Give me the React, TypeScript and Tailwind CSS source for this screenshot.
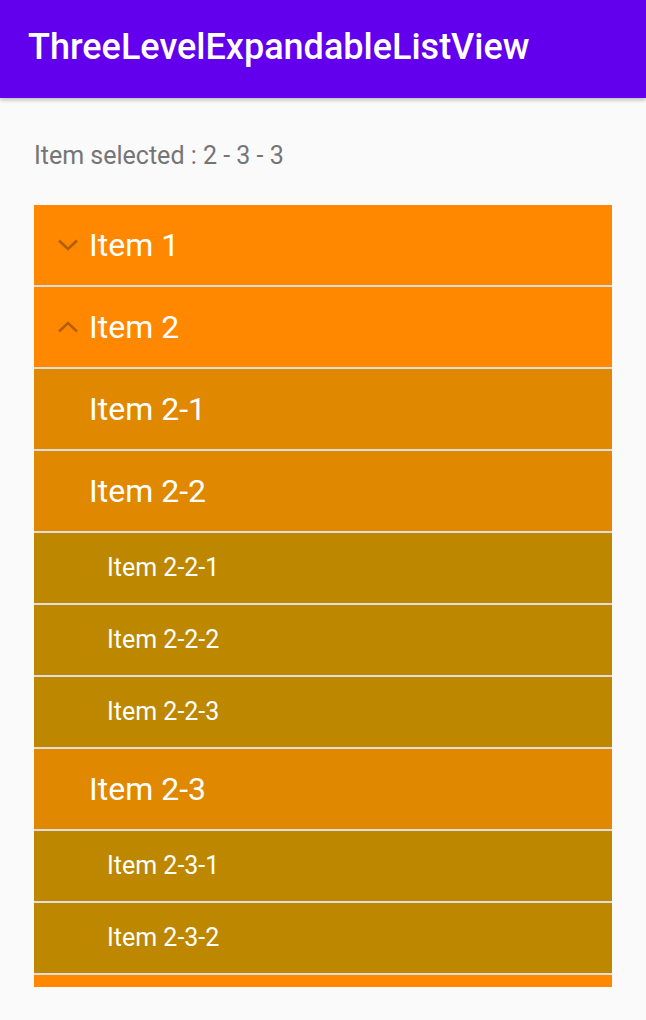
import React from "react";

type Row = {
  label: string;
  level: 1 | 2 | 3;
  expanded?: boolean;
};

const rows: Row[] = [
  { label: "Item 1", level: 1, expanded: false },
  { label: "Item 2", level: 1, expanded: true },
  { label: "Item 2-1", level: 2 },
  { label: "Item 2-2", level: 2 },
  { label: "Item 2-2-1", level: 3 },
  { label: "Item 2-2-2", level: 3 },
  { label: "Item 2-2-3", level: 3 },
  { label: "Item 2-3", level: 2 },
  { label: "Item 2-3-1", level: 3 },
  { label: "Item 2-3-2", level: 3 },
  { label: "Item 3", level: 1, expanded: false },
];

const Chevron = ({ up }: { up?: boolean }) => (
  <svg width="22" height="12" viewBox="0 0 22 12" className="shrink-0">
    <polyline
      points={up ? "2,10.5 11,2 20,10.5" : "2,1.5 11,10 20,1.5"}
      fill="none"
      stroke="rgba(0,0,0,0.3)"
      strokeWidth="2.6"
    />
  </svg>
);

const ListRow = ({ row }: { row: Row }) => {
  if (row.level === 3) {
    return (
      <div className="flex items-center h-[72px] bg-[#bd8700] border-b-2 border-[#dedede] pl-[73px] text-[25px] text-white">
        {row.label}
      </div>
    );
  }

  return (
    <div
      className={`flex items-center h-[82px] border-b-2 border-[#dedede] text-[32px] text-white ${
        row.level === 1 ? "bg-[#ff8800]" : "bg-[#df8800]"
      }`}
    >
      <div className="w-[55px] flex justify-end pr-[10px]">
        {row.level === 1 && <Chevron up={row.expanded} />}
      </div>
      <span>{row.label}</span>
    </div>
  );
};

export default function App() {
  return (
    <div
      className="w-[646px] h-[1020px] bg-[#fafafa] overflow-hidden"
      style={{ fontFamily: "Roboto, 'Noto Sans', sans-serif" }}
    >
      {/* toolbar */}
      <div className="h-[98px] bg-[#6200ee] flex items-center pl-[28px] pb-[4px] shadow-[0_2px_4px_rgba(0,0,0,0.25)] relative">
        <h1 className="text-white text-[36px] font-medium leading-none">
          ThreeLevelExpandableListView
        </h1>
      </div>

      <div className="px-[34px] pt-[43px]">
        <p className="text-[#757575] text-[25px] leading-[30px]">
          Item selected : 2 - 3 - 3
        </p>

        <div className="mt-[34px] h-[782px] overflow-hidden">
          {rows.map((row) => (
            <ListRow key={row.label} row={row} />
          ))}
        </div>
      </div>
    </div>
  );
}
